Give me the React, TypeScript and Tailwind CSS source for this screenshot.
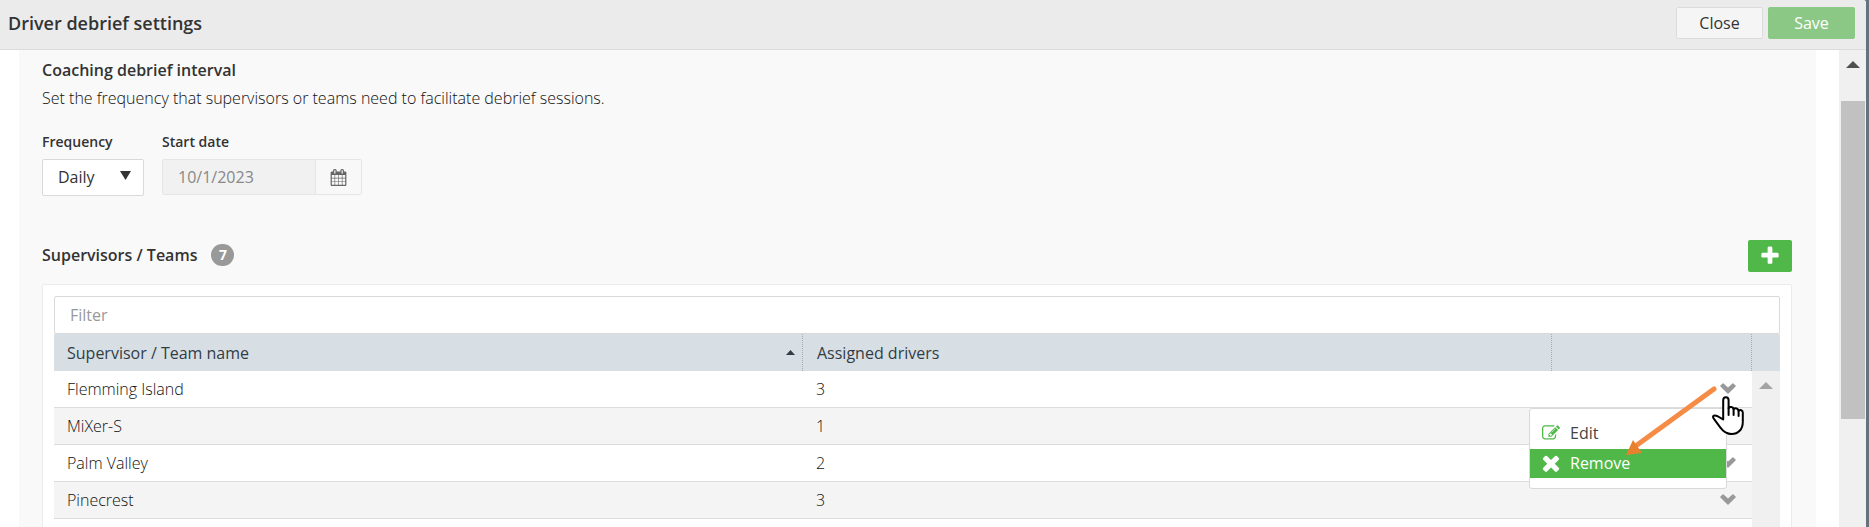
import React from "react";

type IconProps = { d: string; className: string };

const Icon = ({ d, className }: IconProps) => (
  <svg viewBox="0 0 1792 1792" fill="currentColor" className={className} aria-hidden="true">
    <path d={d} />
  </svg>
);

const PENCIL =
  "M888 1184l116-116-152-152-116 116v56h96v96h56zm440-720q-16-16-33 1l-350 350q-17 17-1 33t33-1l350-350q17-17 1-33zm80 594v190q0 119-84.5 203.5t-203.5 84.5h-832q-119 0-203.5-84.5t-84.5-203.5v-832q0-119 84.5-203.5t203.5-84.5h832q63 0 117 25 15 7 18 23 3 17-9 29l-49 49q-14 14-32 8-23-6-45-6h-832q-66 0-113 47t-47 113v832q0 66 47 113t113 47h832q66 0 113-47t47-113v-126q0-13 9-22l64-64q15-15 35-7t20 29zm-96-738l288 288-672 672h-288v-288zm444 132l-92 92-288-288 92-92q28-28 68-28t68 28l152 152q28 28 28 68t-28 68z";
const CALENDAR =
  "M192 1664h288v-288h-288v288zm352 0h320v-288h-320v288zm-352-352h288v-320h-288v320zm352 0h320v-320h-320v320zm-352-384h288v-288h-288v288zm736 736h320v-288h-320v288zm-384-736h320v-288h-320v288zm768 736h288v-288h-288v288zm-384-352h320v-320h-320v320zm-352-864v-288q0-13-9.5-22.5t-22.5-9.5h-64q-13 0-22.5 9.5t-9.5 22.5v288q0 13 9.5 22.5t22.5 9.5h64q13 0 22.5-9.5t9.5-22.5zm736 864h288v-320h-288v320zm-384-384h320v-288h-320v288zm384 0h288v-288h-288v288zm32-480v-288q0-13-9.5-22.5t-22.5-9.5h-64q-13 0-22.5 9.5t-9.5 22.5v288q0 13 9.5 22.5t22.5 9.5h64q13 0 22.5-9.5t9.5-22.5zm384-64v1280q0 52-38 90t-90 38h-1408q-52 0-90-38t-38-90v-1280q0-52 38-90t90-38h128v-96q0-66 47-113t113-47h64q66 0 113 47t47 113v96h384v-96q0-66 47-113t113-47h64q66 0 113 47t47 113v96h128q52 0 90 38t38 90z";
const TIMES =
  "M1490 1322q0 40-28 68l-136 136q-28 28-68 28t-68-28l-294-294-294 294q-28 28-68 28t-68-28l-136-136q-28-28-28-68t28-68l294-294-294-294q-28-28-28-68t28-68l136-136q28-28 68-28t68 28l294 294 294-294q28-28 68-28t68 28l136 136q28 28 28 68t-28 68l-294 294 294 294q28 28 28 68z";
const PLUS =
  "M1600 736v192q0 40-28 68t-68 28h-416v416q0 40-28 68t-68 28h-192q-40 0-68-28t-28-68v-416h-416q-40 0-68-28t-28-68v-192q0-40 28-68t68-28h416v-416q0-40 28-68t68-28h192q40 0 68 28t28 68v416h416q40 0 68 28t28 68z";

const Chevron = () => (
  <svg viewBox="0 0 16 11" className="h-[11px] w-4" aria-hidden="true">
    <path d="M.4 2.6 2.6.4Q3 0 3.6.4L8 4.6 12.4.4Q13 0 13.4.4L15.6 2.6Q16 3 15.6 3.6L8.5 10.6Q8 11 7.5 10.6L.4 3.6Q0 3 .4 2.6Z" fill="#999" />
  </svg>
);

const Triangle = ({ className }: { className: string }) => (
  <svg viewBox="0 0 14 7" preserveAspectRatio="none" fill="currentColor" className={className} aria-hidden="true">
    <path d="M7 0 14 7H0z" />
  </svg>
);

const HandCursor = () => (
  <svg viewBox="0 0 32 39" className="pointer-events-none absolute top-[25px] right-2 z-30 h-[39px] w-8" aria-hidden="true">
    <path
      d="M11.2 23.5V4.2C11.2 .4 16.6 .4 16.6 4.2V12.2C17.6 10.2 21.4 10.6 21.6 13.2 23 11.6 26.4 12.2 26.6 14.8 28 13.4 30.8 14.2 30.8 16.6V26C30.8 33.4 26.2 38 19.6 38 14.6 38 11.2 35.4 8.4 31.6L1.6 22.4C-.2 19.6 2.6 18.8 5.4 20.2Z"
      fill="#fff"
      stroke="#000"
      strokeWidth="2"
      strokeLinejoin="round"
    />
    <path d="M16.6 12V19M21.6 13V19M26.6 14.6V20" stroke="#000" strokeWidth="2" strokeLinecap="round" />
  </svg>
);

const GuideArrow = () => (
  <svg viewBox="0 0 94 72" className="pointer-events-none absolute top-[14px] right-[33px] z-20 h-[72px] w-[94px]" aria-hidden="true">
    <path d="M89 4 12 60" stroke="#f68b46" strokeWidth="5" strokeLinecap="round" />
    <path d="M1 70 8 55 17 68Z" fill="#e8812f" />
  </svg>
);

const RowMenu = () => (
  <div role="menu" className="absolute top-[37px] right-[25px] z-10 flex w-[198px] flex-col rounded-[3px] border border-[#d9d9d9] bg-white pt-[10px] pb-[10px] text-left">
    <button role="menuitem" className="flex h-[30px] items-center gap-[10px] pb-[2px] pl-3 text-[#444]">
      <Icon d={PENCIL} className="h-[18px] w-[18px] text-[#50b848]" />
      Edit
    </button>
    <button role="menuitem" className="flex h-[29px] items-center gap-[10px] bg-[#50b848] pb-[2px] pl-3 text-white">
      <svg viewBox="300 246 1192 1310" fill="currentColor" className="h-[18px] w-[18px]" aria-hidden="true">
        <path d={TIMES} />
      </svg>
      Remove
    </button>
  </div>
);

const teams = [
  { name: "Flemming Island", drivers: 3 },
  { name: "MiXer-S", drivers: 1 },
  { name: "Palm Valley", drivers: 2 },
  { name: "Pinecrest", drivers: 3 },
];

export default function App() {
  return (
    <div className="flex h-screen overflow-hidden bg-[#66717b] pr-[3px] font-['Open_Sans','Noto_Sans',sans-serif] text-base text-[#333]">
      <div className="flex min-w-0 flex-1 flex-col overflow-hidden rounded-tr-[3px] bg-white">
        <header className="flex h-[50px] shrink-0 items-center justify-between border-b border-[#dcdcdc] bg-[#ebebeb] pr-[11px] pb-[3px] pl-2">
          <h1 className="text-lg font-semibold text-[#333]">Driver debrief settings</h1>
          <div className="flex gap-[5px]">
            <button className="h-8 w-[87px] rounded-[2px] border border-[#dcdcdc] bg-[#f5f5f5]">Close</button>
            <button className="h-8 w-[87px] rounded-[2px] bg-[#8bc886] text-white">Save</button>
          </div>
        </header>

        <div className="flex min-h-0 flex-1">
          <main className="ml-[19px] min-w-0 flex-1 bg-[#f9f9f9] pt-2 pr-6 pl-[23px]">
            <section className="flex flex-col">
              <h2 className="leading-6 font-semibold text-[#333]">Coaching debrief interval</h2>
              <p className="mt-1 leading-6 font-light text-[#111]">Set the frequency that supervisors or teams need to facilitate debrief sessions.</p>
              <div className="mt-[22px] flex gap-[18px]">
                <div className="flex flex-col gap-[7px]">
                  <label htmlFor="frequency" className="text-sm leading-5 font-semibold text-[#333]">Frequency</label>
                  <div className="relative">
                    <select id="frequency" className="h-[37px] w-[102px] appearance-none rounded-[2px] border border-[#d9d9d9] bg-white pb-[2px] pl-[15px]">
                      <option>Daily</option>
                    </select>
                    <Triangle className="pointer-events-none absolute top-3 right-[13px] h-[9px] w-[11px] rotate-180" />
                  </div>
                </div>
                <div className="flex flex-col gap-[7px]">
                  <label htmlFor="start" className="text-sm leading-5 font-semibold text-[#333]">Start date</label>
                  <div className="flex h-9 rounded-[2px] border border-[#e5e5e5]">
                    <input id="start" disabled defaultValue="10/1/2023" className="w-[152px] bg-[#f1f1f1] pl-[15px] text-[#888]" />
                    <button aria-label="Open calendar" className="flex w-[46px] items-center justify-center border-l border-[#e5e5e5] bg-[#f8f8f8] text-[#666]">
                      <Icon d={CALENDAR} className="h-[17px] w-[17px]" />
                    </button>
                  </div>
                </div>
              </div>
            </section>

            <section className="mt-11 flex flex-col">
              <div className="flex h-8 items-center justify-between">
                <div className="flex items-center gap-[14px] pb-[2px]">
                  <h2 className="font-semibold text-[#333]">Supervisors / Teams</h2>
                  <span className="flex h-[22px] w-[23px] items-center justify-center rounded-full bg-[#999] text-sm font-bold text-white">7</span>
                </div>
                <button aria-label="Add team" className="flex h-8 w-11 items-center justify-center rounded-[2px] bg-[#50b848] text-white">
                  <Icon d={PLUS} className="h-[22px] w-[22px]" />
                </button>
              </div>

              <div className="mt-3 rounded-[2px] border border-[#ebebeb] bg-white p-[11px]">
                <input aria-label="Filter" placeholder="Filter" className="block h-[38px] w-full rounded-[2px] border border-[#d9d9d9] pl-[15px] placeholder:text-[#999]" />
                <table className="w-full table-fixed border-separate border-spacing-0 text-left">
                  <colgroup>
                    <col />
                    <col />
                    <col className="w-[200px]" />
                    <col className="w-7" />
                  </colgroup>
                  <thead>
                    <tr className="h-[37px] bg-[#d7dfe5] text-[#333c45]">
                      <th className="border-r border-dotted border-[#aaa] p-0 pr-[7px] pl-[13px] font-normal">
                        <div className="flex items-center justify-between">
                          Supervisor / Team name
                          <Triangle className="h-[5px] w-[9px]" />
                        </div>
                      </th>
                      <th className="border-r border-dotted border-[#aaa] p-0 pl-[14px] font-normal">Assigned drivers</th>
                      <th className="border-r border-dotted border-[#aaa] p-0" />
                      <th className="p-0" />
                    </tr>
                  </thead>
                  <tbody>
                    {teams.map((team, i) => (
                      <tr key={team.name} className="h-[37px] odd:bg-white even:bg-[#f4f4f4]">
                        <td className="border-b border-[#dcdcdc] p-0 pl-[13px] font-light text-[#111]">{team.name}</td>
                        <td className="border-b border-[#dcdcdc] p-0 pl-[13px] font-light text-[#111]">{team.drivers}</td>
                        <td className="relative border-b border-[#dcdcdc] p-0 pr-4 pb-[2px]">
                          {i !== 1 && (
                            <button aria-label={"Actions for " + team.name} className="ml-auto block">
                              <Chevron />
                            </button>
                          )}
                          {i === 0 && (
                            <>
                              <RowMenu />
                              <GuideArrow />
                              <HandCursor />
                            </>
                          )}
                        </td>
                        {i === 0 && (
                          <td rowSpan={teams.length + 1} className="bg-[#f0f0f0] p-0 pt-[11px] align-top">
                            <Triangle className="mx-auto h-[7px] w-[14px] text-[#a3a3a3]" />
                          </td>
                        )}
                      </tr>
                    ))}
                    <tr className="h-[37px]">
                      <td colSpan={3} />
                    </tr>
                  </tbody>
                </table>
              </div>
            </section>
          </main>

          <div className="ml-[23px] flex w-[27px] shrink-0 flex-col items-center bg-[#f0f0f0] pt-[11px]">
            <Triangle className="h-[7px] w-[14px] shrink-0 text-[#505050]" />
            <div className="mt-[33px] h-[318px] w-6 shrink-0 bg-[#c1c1c1]" />
          </div>
        </div>
      </div>
    </div>
  );
}
